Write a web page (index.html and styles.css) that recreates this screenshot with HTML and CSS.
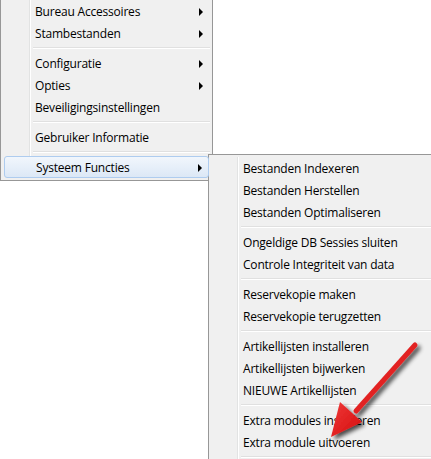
FILE: index.html
```html
<!DOCTYPE html>
<html lang="nl">
<head>
  <meta charset="UTF-8">
  <title>Menu - Systeem Functies</title>
  <link rel="stylesheet" href="styles.css">
</head>
<body>

  <div class="menu main-menu">
    <div class="item sub">Bureau Accessoires</div>
    <div class="item sub">Stambestanden</div>
    <div class="sep"></div>
    <div class="item sub">Configuratie</div>
    <div class="item sub">Opties</div>
    <div class="item">Beveiligingsinstellingen</div>
    <div class="sep"></div>
    <div class="item">Gebruiker Informatie</div>
    <div class="sep"></div>
    <div class="item sub active">Systeem Functies</div>
  </div>

  <div class="menu sub-menu">
    <div class="item">Bestanden Indexeren</div>
    <div class="item">Bestanden Herstellen</div>
    <div class="item">Bestanden Optimaliseren</div>
    <div class="sep"></div>
    <div class="item">Ongeldige DB Sessies sluiten</div>
    <div class="item">Controle Integriteit van data</div>
    <div class="sep"></div>
    <div class="item">Reservekopie maken</div>
    <div class="item">Reservekopie terugzetten</div>
    <div class="sep"></div>
    <div class="item">Artikellijsten installeren</div>
    <div class="item">Artikellijsten bijwerken</div>
    <div class="item">NIEUWE Artikellijsten</div>
    <div class="sep"></div>
    <div class="item">Extra modules installeren</div>
    <div class="item">Extra module uitvoeren</div>
    <div class="sep"></div>
  </div>

  <!-- rode pijl naar "Extra module uitvoeren" -->
  <svg class="pointer" width="120" height="120" viewBox="0 0 120 120">
    <defs>
      <filter id="shadow" x="-20%" y="-20%" width="150%" height="150%">
        <feGaussianBlur in="SourceAlpha" stdDeviation="2"/>
        <feOffset dx="3" dy="3"/>
        <feComponentTransfer><feFuncA type="linear" slope="0.7"/></feComponentTransfer>
        <feMerge><feMergeNode/><feMergeNode in="SourceGraphic"/></feMerge>
      </filter>
      <linearGradient id="red" x1="0" y1="0" x2="1" y2="1">
        <stop offset="0" stop-color="#f03a3a"/>
        <stop offset="1" stop-color="#d40c0c"/>
      </linearGradient>
    </defs>
    <g filter="url(#shadow)">
      <line x1="95" y1="15" x2="36" y2="81" stroke="url(#red)" stroke-width="5" stroke-linecap="round"/>
      <polygon points="11,107 20,72 42,92" fill="url(#red)"/>
    </g>
  </svg>

</body>
</html>
```

FILE: styles.css
```css
html, body {
  overflow: hidden;
}

body {
  margin: 0;
  width: 431px;
  height: 459px;
  background-color: #fff;
  font-family: 'Open Sans', 'Noto Sans', sans-serif;
  font-size: 12px;
  color: #000;
  position: relative;
}

.menu {
  position: relative;
  background-color: #f0f0f0;
  border: 1px solid #979797;
  padding: 2px;
  box-sizing: border-box;
}

/* vertical gutter line */
.menu::before {
  content: '';
  position: absolute;
  top: 2px;
  bottom: 2px;
  left: 28px;
  width: 1px;
  background-color: #e2e3e3;
  box-shadow: 1px 0 0 #fff;
}

.main-menu {
  width: 213px;
  margin-top: -3px;
}

.sub-menu {
  position: absolute;
  left: 208px;
  top: 154px;
  width: 250px;
  padding-bottom: 10px;
}

.item {
  position: relative;
  height: 21px;
  padding-top: 1px;
  line-height: 22px;
  padding-left: 32px;
  white-space: nowrap;
  letter-spacing: -0.2px;
}

.item.sub::after {
  content: '';
  position: absolute;
  right: 7px;
  top: 8px;
  border-left: 4px solid #000;
  border-top: 4px solid transparent;
  border-bottom: 4px solid transparent;
}

.item.active {
  background: linear-gradient(#f1f6fc, #dce8f6);
  border: 1px solid #aeccef;
  border-radius: 3px;
  height: 19px;
  line-height: 20px;
  padding-left: 31px;
  margin: 0 1px;
  z-index: 1;
}

.item.active::after {
  right: 6px;
  top: 7px;
}

.sep {
  height: 8px;
  position: relative;
}

.sep::after {
  content: '';
  position: absolute;
  left: 30px;
  right: 0;
  top: 3px;
  height: 1px;
  background-color: #e0e0e0;
  box-shadow: 0 1px 0 #fff;
}

.pointer {
  position: absolute;
  left: 320px;
  top: 330px;
}
```
